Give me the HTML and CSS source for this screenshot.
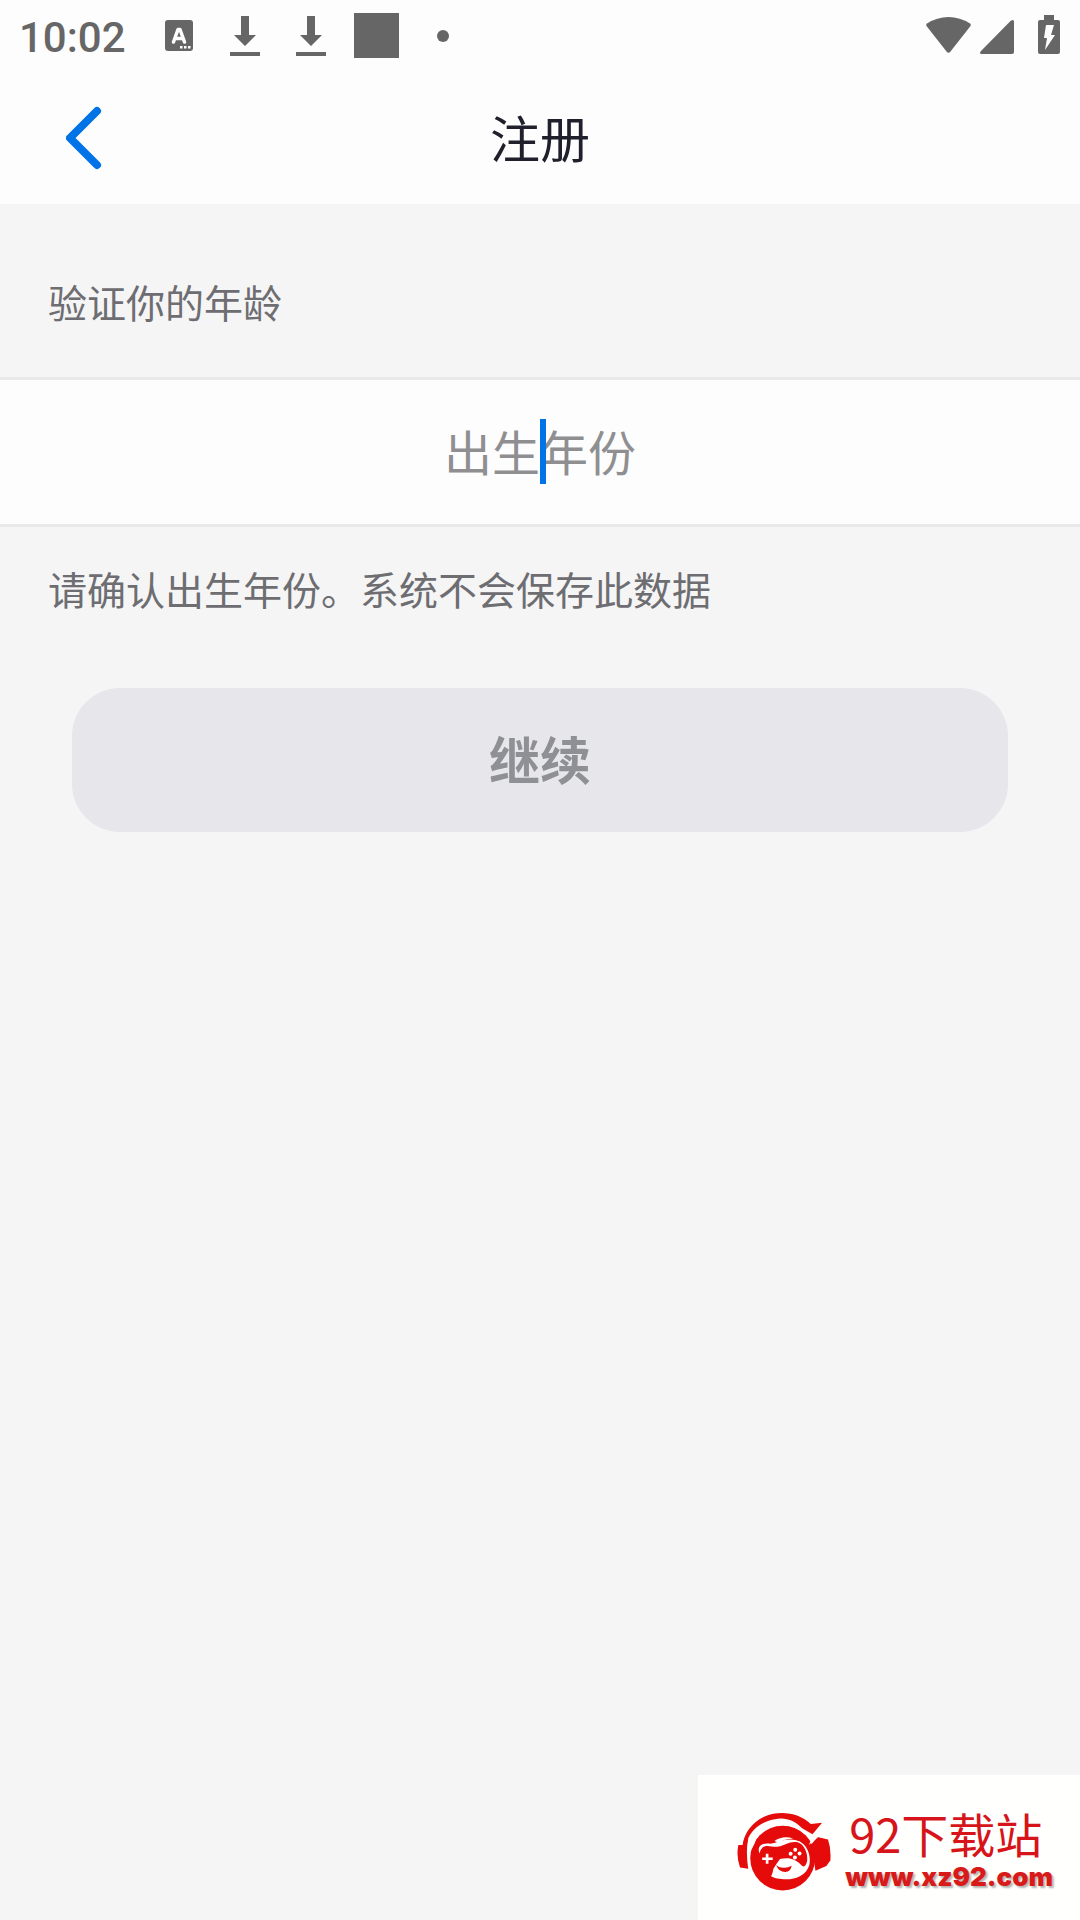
FILE: index.html
```html
<!DOCTYPE html>
<html lang="zh-CN">
<head>
    <meta charset="UTF-8">
    <meta name="viewport" content="width=device-width, initial-scale=1.0">
    <title>注册</title>
    <link rel="stylesheet" href="styles.css">
</head>
<body>
    <div class="status-bar">
        <span class="time">10:02</span>
        <div class="notifications">
            <svg class="icon" viewBox="0 0 48 48">
                <rect x="10" y="8" width="28" height="31" rx="3" fill="#666"/>
                <path d="M18.500 30L23 17.500h2L29.500 30M20.500 26.500h7" fill="none" stroke="#fff" stroke-width="3.500" stroke-linecap="round" stroke-linejoin="round"/>
                <path d="M25 34h2.500v2.500H25zM29 34h2.500v2.500H29zM33 34h2.500v2.500H33z" fill="#fff"/>
            </svg>
            <svg class="icon" viewBox="0 0 48 48">
                <path d="M20 4h8v19h7L24 34 13 23h7zM9 40h30v4H9z" fill="#666"/>
            </svg>
            <svg class="icon" viewBox="0 0 48 48">
                <path d="M20 4h8v19h7L24 34 13 23h7zM9 40h30v4H9z" fill="#666"/>
            </svg>
            <svg class="icon" viewBox="0 0 48 48">
                <path d="M1 1h45v45H1z" fill="#666"/>
            </svg>
            <svg class="icon" viewBox="0 0 48 48">
                <circle cx="24" cy="24" r="6" fill="#666"/>
            </svg>
        </div>
        <div class="system">
            <svg class="icon" viewBox="0 0 48 48">
                <path d="M1.500 14Q.5 12.500 2 11.500Q12 5 23.500 5T45 11.500Q46.500 12.500 45.500 14L25.500 39.500Q23.500 42 21.500 39.500Z" fill="#666"/>
            </svg>
            <svg class="icon" viewBox="0 0 48 48">
                <path d="M6 39L35.500 9Q39 6.500 39 10V40Q39 42 37 42H7Q3.500 42 6 39Z" fill="#666"/>
            </svg>
            <svg class="icon" viewBox="0 0 48 48">
                <path d="M19 3h10v5h4q2 0 2 2v30q0 2-2 2H15q-2 0-2-2V10q0-2 2-2h4z" fill="#666"/>
                <path d="M21 13h8l-3 10h4L20 38l2-12h-3z" fill="#fff"/>
            </svg>
        </div>
    </div>

    <header class="header">
        <a class="back" href="#" aria-label="返回">
            <svg viewBox="0 0 36 64">
                <path d="M31 5L4 32L31 59" fill="none" stroke="#0073e6" stroke-width="8" stroke-linecap="round" stroke-linejoin="round"/>
            </svg>
        </a>
        <h1>注册</h1>
    </header>

    <main>
        <form class="age-form">
            <label class="label" for="birth-year">验证你的年龄</label>
            <div class="field">
                <input id="birth-year" type="text" inputmode="numeric" placeholder="出生年份" aria-describedby="hint">
                <span class="caret"></span>
            </div>
            <p class="hint" id="hint">请确认出生年份。系统不会保存此数据</p>
            <button class="continue-btn" type="submit" disabled>继续</button>
        </form>
    </main>

    <div class="watermark">
        <svg class="watermark-logo" viewBox="15 16 284 238">
            <!-- headphones -->
            <path d="M32 112C41 55 92 16 150 16C185 16 215 28 238 49L272 45L243 80L212 62C195 43 172 32 148 32C98 34 60 62 49 94L46 112Q43 148 49 184L24 180Q12 146 19 112Z" fill="#e60b0b"/>
            <path d="M258 88L290 96Q300 126 297 159L285 176L252 190L240 110Z" fill="#e60b0b"/>
            <!-- face -->
            <circle cx="153" cy="152" r="98" fill="#e60b0b"/>
            <path d="M50 90L77 84L68 108L61 122L50 130Z" fill="#fffffd"/>
            <path d="M272 56L266 84L232 112L240 95Z" fill="#fffffd"/>
            <g transform="translate(-15 -9)">
                <path d="M98 147C90 126 103 116 124 117C139 119 149 113 157 111C178 103 202 102 220 111C241 122 254 151 249 180C240 213 207 227 170 225Q143 223 133 216Q138 208 140 193L151 176L160 164C186 157 208 164 223 181Q236 195 242 170C245 147 233 118 213 113C191 108 174 122 155 126C140 130 122 119 108 128Q100 135 98 147Z" fill="#fff"/>
                <path d="M143 109Q170 91 200 102Q172 103 158 115Z" fill="#fff"/>
                <path d="M121 148V178M106 163H138" fill="none" stroke="#fff" stroke-width="8"/>
                <g fill="#fff">
                    <circle cx="206" cy="136" r="6"/>
                    <circle cx="192" cy="148" r="6"/>
                    <circle cx="219" cy="147" r="6"/>
                    <circle cx="205" cy="159" r="6"/>
                </g>
                <path d="M148 181Q155 191 174 190Q185 190 195 184Q193 201 176 203Q155 203 148 181Z" fill="#e60b0b"/>
            </g>
        </svg>
        <div class="watermark-text">
            <span class="watermark-name">92下载站</span>
            <span class="watermark-url">www.xz92.com</span>
        </div>
    </div>
</body>
</html>
```
FILE: styles.css
```css
* {
    margin: 0;
    padding: 0;
    box-sizing: border-box;
}

body {
    font-family: 'Noto Sans CJK SC', sans-serif;
    background: #f5f5f5;
    color: #6d6d72;
    min-height: 100vh;
}

.status-bar {
    display: flex;
    align-items: center;
    height: 72px;
    padding: 0 7px 0 19px;
    background: #fdfdfd;
}

.time {
    padding-top: 3px;
    font-family: Roboto, sans-serif;
    font-size: 42px;
    font-weight: 500;
    line-height: 69px;
    color: #666;
}

.notifications {
    display: flex;
    gap: 18px;
    margin-left: 29px;
}

.system {
    display: flex;
    gap: 2px;
    margin-left: auto;
}

.icon {
    width: 48px;
    height: 48px;
}

.header {
    display: grid;
    grid-template-columns: 1fr auto 1fr;
    align-items: center;
    height: 132px;
    background: #fdfdfd;
}

.back {
    display: flex;
    width: 36px;
    margin-left: 66px;
}

.back svg {
    width: 36px;
    height: 64px;
}

.header h1 {
    padding-bottom: 4px;
    font-size: 50px;
    font-weight: 400;
    line-height: 72px;
    color: #20202c;
}

.age-form {
    display: flex;
    flex-direction: column;
}

.label,
.hint {
    padding: 0 48px;
    font-size: 39px;
    line-height: 60px;
}

.label {
    margin: 67px 0 46px;
}

.field {
    position: relative;
    height: 150px;
    background: #fdfdfd;
    border-top: 3px solid #e9e9e9;
    border-bottom: 3px solid #e9e9e9;
}

.field input {
    width: 100%;
    height: 100%;
    padding-bottom: 4px;
    border: none;
    outline: none;
    background: transparent;
    font-family: inherit;
    font-size: 48px;
    color: #20202c;
    text-align: center;
    caret-color: #0073e6;
}

.field input::placeholder {
    color: #8f8f92;
    opacity: 1;
}

.caret {
    position: absolute;
    top: 39px;
    left: 50%;
    width: 6px;
    height: 65px;
    background: #0073e6;
    pointer-events: none;
}

.hint {
    margin: 31px 0 70px;
}

.continue-btn {
    height: 144px;
    margin: 0 72px;
    padding-bottom: 4px;
    border: none;
    border-radius: 48px;
    background: #e6e6eb;
    font-family: inherit;
    font-size: 51px;
    font-weight: 700;
    color: #8f8f96;
}

.watermark {
    position: fixed;
    right: 0;
    bottom: 0;
    display: flex;
    align-items: center;
    gap: 14px;
    height: 145px;
    padding: 10px 27px 0 39px;
    background: #fffffd;
}

.watermark-logo {
    width: 94px;
    height: 79px;
}

.watermark-text {
    display: flex;
    flex-direction: column;
    margin-bottom: 8px;
}

.watermark-name {
    padding-left: 4px;
    font-size: 47px;
    line-height: 56px;
    color: #d7141a;
}

.watermark-url {
    font-family: Inter, sans-serif;
    font-size: 26px;
    font-weight: 900;
    line-height: 32px;
    color: #d91a1a;
    text-shadow: 2px 2px 2px rgba(0, 0, 0, 0.3);
}
```
